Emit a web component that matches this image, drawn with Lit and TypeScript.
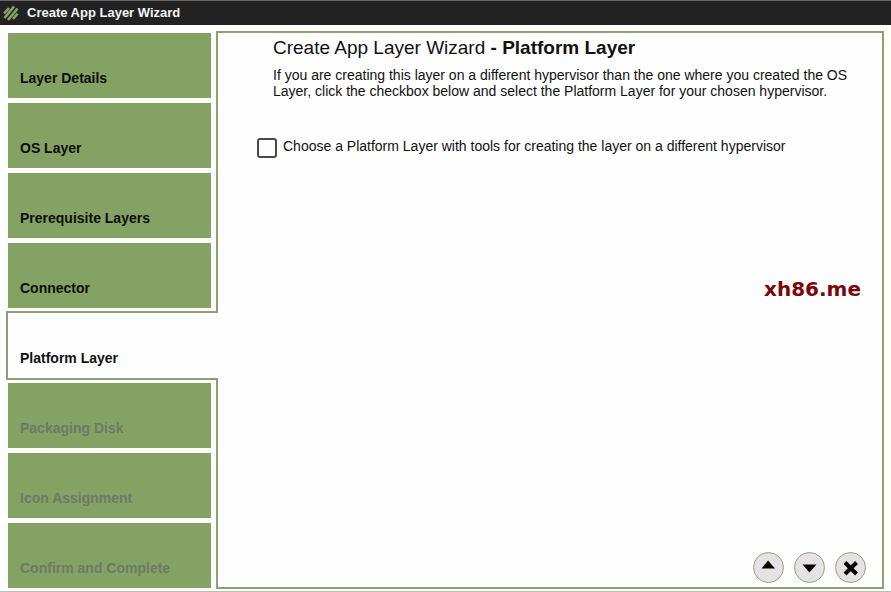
import { LitElement, html, css } from "lit";
import { customElement, state } from "lit/decorators.js";
import { classMap } from "lit/directives/class-map.js";

const STEPS = [
  "Layer Details",
  "OS Layer",
  "Prerequisite Layers",
  "Connector",
  "Platform Layer",
  "Packaging Disk",
  "Icon Assignment",
  "Confirm and Complete",
];

@customElement("app-root")
export class AppRoot extends LitElement {
  static styles = css`
    :host {
      display: flex;
      flex-direction: column;
      box-sizing: border-box;
      min-height: 100vh;
      background: #fefefe;
      border-bottom: 1px solid #bdbdbd;
      font-family: "Liberation Sans", Arial, sans-serif;
      font-size: 14px;
      line-height: 16px;
      color: #111;
    }
    .bar {
      display: flex;
      align-items: center;
      gap: 8px;
      height: 25px;
      padding-left: 3px;
      box-sizing: border-box;
      background: #222;
      border-top: 1px solid #68656a;
      color: #f4f4f4;
    }
    .bar h1 {
      margin: 0;
      font-size: 13px;
      font-weight: bold;
    }
    .logo {
      width: 16px;
      height: 16px;
    }
    .body {
      flex: 1;
      display: flex;
      gap: 5px;
      padding: 6px 7px 2px 8px;
    }
    .steps {
      flex: none;
      display: flex;
      flex-direction: column;
      gap: 5px;
      width: 203px;
      margin: 2px 0 0;
      padding: 0;
      list-style: none;
    }
    .step {
      display: flex;
      height: 65px;
    }
    .step button {
      flex: 1;
      display: flex;
      align-items: flex-end;
      padding: 0 12px 12px;
      border: 0;
      background: #84a264;
      color: #0c0f08;
      font: bold 14px/16px "Liberation Sans", Arial, sans-serif;
      text-align: left;
    }
    .step button:disabled {
      color: #6e7a66;
    }
    .step.current button {
      position: relative;
      z-index: 1;
      margin: -2px -7px -2px -2px;
      border: 2px solid #8ca078;
      border-right: 0;
      background: #fefefe;
      color: #111;
    }
    .panel {
      position: relative;
      flex: 1;
      display: flex;
      flex-direction: column;
      border: 2px solid #8aa371;
    }
    .intro {
      padding: 3px 30px 0 55px;
    }
    .intro h2 {
      margin: 0 0 7px;
      font-size: 19px;
      line-height: 24px;
      font-weight: normal;
    }
    .intro p {
      margin: 0;
    }
    .choice {
      display: flex;
      gap: 6px;
      margin: 39px 16px 0 39px;
    }
    .choice input {
      appearance: none;
      flex: none;
      width: 20px;
      height: 20px;
      margin: 0;
      border: 2px solid #484848;
      border-radius: 3px;
      background: #fdfdfd;
    }
    .choice input:checked {
      background: #84a264;
    }
    .actions {
      display: flex;
      justify-content: flex-end;
      gap: 10px;
      margin-top: auto;
      padding: 0 16px 4px;
    }
    .actions button {
      width: 31px;
      height: 31px;
      padding: 0;
      border: 1px solid #8fa677;
      border-radius: 50%;
      background: #e6e2e4;
    }
    .actions svg {
      display: block;
      width: 29px;
      height: 29px;
    }
    .mark {
      position: absolute;
      top: 244px;
      right: 21px;
      color: #7d0506;
      font: bold 20px/24px "DejaVu Sans", sans-serif;
    }
  `;

  @state() private current = 4;

  private go(index: number) {
    this.current = Math.max(0, Math.min(STEPS.length - 1, index));
  }

  render() {
    return html`
      <header class="bar">
        <svg class="logo" viewBox="0 0 16 16" aria-hidden="true">
          <g fill="none" stroke="#86a566" stroke-width="2.6">
            <path d="M1 8.5 6 3" />
            <path d="M1.5 13 11 1.5" />
            <path d="M5 15 14.5 3.5" />
            <path d="M10 14 14.5 8.5" />
          </g>
        </svg>
        <h1>Create App Layer Wizard</h1>
      </header>
      <div class="body">
        <ol class="steps">
          ${STEPS.map(
            (name, i) => html`
              <li class=${classMap({ step: true, current: i === this.current })}>
                <button ?disabled=${i > this.current} @click=${() => this.go(i)}>${name}</button>
              </li>
            `
          )}
        </ol>
        <main class="panel">
          <div class="intro">
            <h2>Create App Layer Wizard <b>- ${STEPS[this.current]}</b></h2>
            <p>
              If you are creating this layer on a different hypervisor than the one where you
              created the OS Layer, click the checkbox below and select the Platform Layer for your
              chosen hypervisor.
            </p>
          </div>
          <div class="choice">
            <input id="other" type="checkbox" />
            <label for="other"
              >Choose a Platform Layer with tools for creating the layer on a different
              hypervisor</label
            >
          </div>
          <div class="mark">xh86.me</div>
          <div class="actions">
            <button aria-label="Previous" @click=${() => this.go(this.current - 1)}>
              <svg viewBox="0 0 29 29"><path d="M7.5 15.5 14 7.5 21 15.5Z" /></svg>
            </button>
            <button aria-label="Next" @click=${() => this.go(this.current + 1)}>
              <svg viewBox="0 0 29 29"><path d="M7.5 11.5H21.5L14.5 19.5Z" /></svg>
            </button>
            <button aria-label="Cancel">
              <svg viewBox="0 0 29 29">
                <path d="M9 9.5 20.5 21M20.5 9.5 9 21" stroke="#000" stroke-width="4" />
              </svg>
            </button>
          </div>
        </main>
      </div>
    `;
  }
}
